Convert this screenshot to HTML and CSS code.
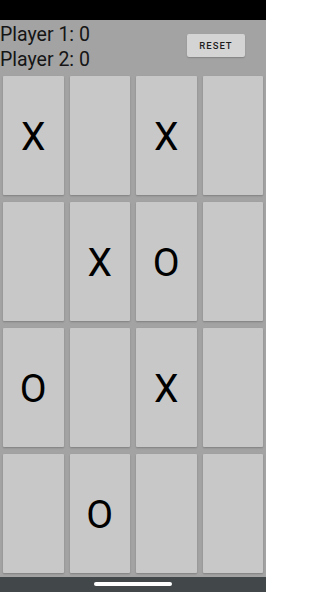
FILE: index.html
```html
<!DOCTYPE html>
<html>
<head>
<meta charset="utf-8">
<link rel="stylesheet" href="styles.css">
</head>
<body>
<div class="screen">
  <div class="status"></div>
  <div class="header">
    <div class="scores">
      <div class="score">Player 1: 0</div>
      <div class="score">Player 2: 0</div>
    </div>
    <button class="reset">RESET</button>
  </div>
  <div class="board">
    <div class="cell">X</div>
    <div class="cell"></div>
    <div class="cell">X</div>
    <div class="cell"></div>
    <div class="cell"></div>
    <div class="cell">X</div>
    <div class="cell">O</div>
    <div class="cell"></div>
    <div class="cell">O</div>
    <div class="cell"></div>
    <div class="cell">X</div>
    <div class="cell"></div>
    <div class="cell"></div>
    <div class="cell">O</div>
    <div class="cell"></div>
    <div class="cell"></div>
  </div>
  <div class="navbar"><div class="pill"></div></div>
</div>
</body>
</html>
```
FILE: styles.css
```css
html, body {
  margin: 0;
  padding: 0;
}
body {
  width: 266px;
  height: 592px;
  overflow: hidden;
  font-family: Roboto, "Liberation Sans", sans-serif;
}
.screen {
  display: flex;
  flex-direction: column;
  height: 592px;
  background: #a3a3a3;
}
.status {
  height: 20px;
  background: #000;
  flex: none;
}
.header {
  height: 53px;
  flex: none;
  display: flex;
  justify-content: space-between;
  align-items: flex-start;
  box-sizing: border-box;
  padding-top: 2px;
}
.score {
  font-size: 19.5px;
  line-height: 25px;
  color: #151515;
}
.reset {
  margin: 12px 21px 0 0;
  width: 58px;
  height: 23px;
  border: none;
  border-radius: 2px;
  background: #d4d4d4;
  color: #1e1e1e;
  font-family: Roboto, "Liberation Sans", sans-serif;
  font-weight: 500;
  font-size: 9.5px;
  letter-spacing: 1px;
  padding: 0;
  box-shadow: 0 1px 1.5px rgba(0,0,0,0.2);
}
.board {
  flex: 1;
  display: grid;
  grid-template-columns: repeat(4, 1fr);
  grid-template-rows: repeat(4, 1fr);
  column-gap: 6px;
  row-gap: 7px;
  padding: 3px 3px 4px 3px;
}
.cell {
  background: #c8c8c8;
  border-radius: 1px;
  box-shadow: 0 1px 2px rgba(0,0,0,0.22);
  display: flex;
  align-items: center;
  justify-content: center;
  font-size: 39px;
  color: #000;
  padding-top: 2px;
  box-sizing: border-box;
}
.navbar {
  height: 15px;
  flex: none;
  background: #42474a;
  display: flex;
  justify-content: center;
  padding-top: 5px;
  box-sizing: border-box;
}
.pill {
  width: 78px;
  height: 4px;
  border-radius: 2px;
  background: #fff;
}
```
